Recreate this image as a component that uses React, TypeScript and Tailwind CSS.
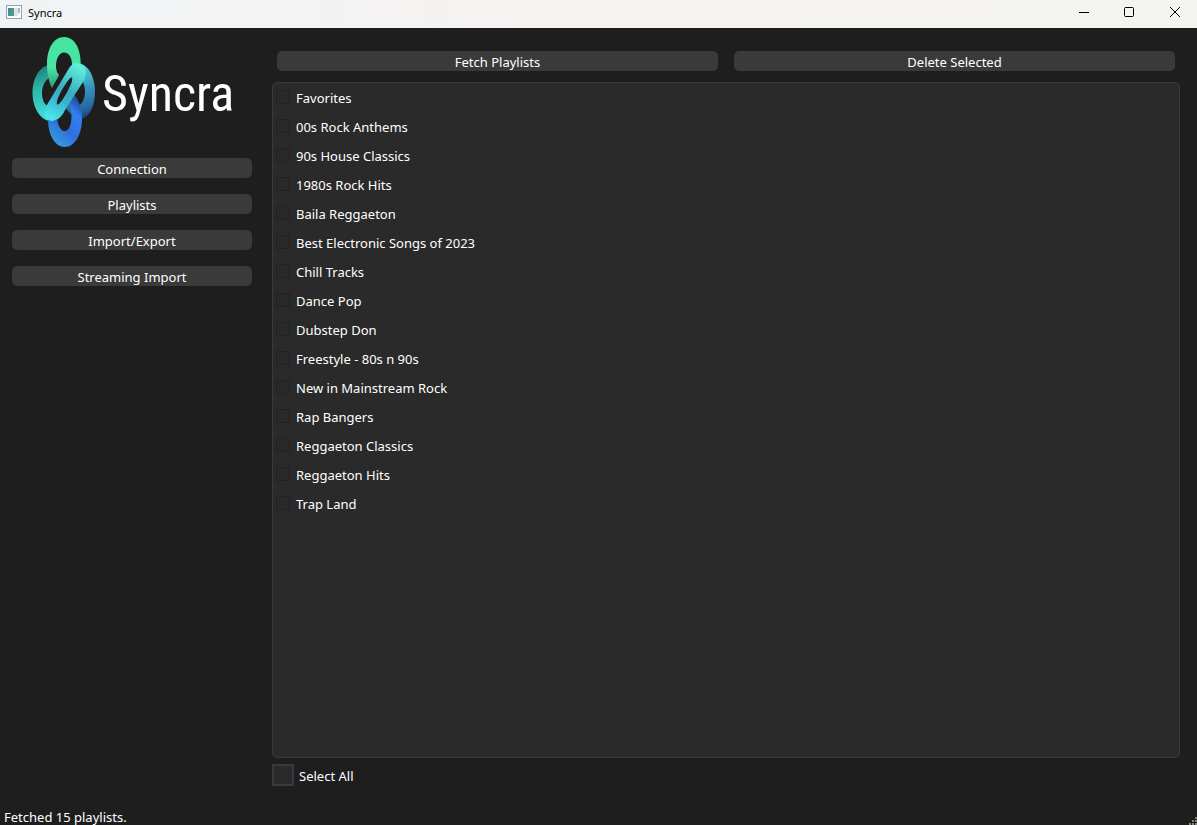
import { useState } from "react";

const pages = ["Connection", "Playlists", "Import/Export", "Streaming Import"];

const playlists = [
  "Favorites",
  "00s Rock Anthems",
  "90s House Classics",
  "1980s Rock Hits",
  "Baila Reggaeton",
  "Best Electronic Songs of 2023",
  "Chill Tracks",
  "Dance Pop",
  "Dubstep Don",
  "Freestyle - 80s n 90s",
  "New in Mainstream Rock",
  "Rap Bangers",
  "Reggaeton Classics",
  "Reggaeton Hits",
  "Trap Land",
];

const buttonStyle =
  "flex h-5 items-center justify-center rounded-[5px] bg-[#3a3a3a] pt-px text-[13px] leading-4 text-white hover:bg-[#484848]";

function AppIcon() {
  return (
    <svg width="16" height="14" viewBox="0 0 16 14" aria-hidden="true">
      <defs>
        <linearGradient id="pane" x1="0" y1="0" x2="1" y2="1">
          <stop offset="0" stopColor="#4a7fb0" />
          <stop offset="1" stopColor="#4aa874" />
        </linearGradient>
      </defs>
      <rect x="0.5" y="0.5" width="15" height="13" fill="#fafafa" stroke="#9ba3ab" />
      <rect x="2" y="3" width="6" height="8" fill="url(#pane)" />
      <rect x="8" y="3" width="4" height="8" fill="#dfe2e4" />
      <rect x="12" y="3" width="2" height="5" fill="#9cc0d0" />
    </svg>
  );
}

function LogoMark() {
  return (
    <svg width="64" height="112" viewBox="32 36 64 112" aria-hidden="true">
      <defs>
        <linearGradient id="top" x1="0" y1="0" x2="0" y2="1">
          <stop offset="0" stopColor="#43e5a0" />
          <stop offset="0.6" stopColor="#4be3a4" />
          <stop offset="1" stopColor="#2b9a78" />
        </linearGradient>
        <linearGradient id="left" x1="0.3" y1="0" x2="0.5" y2="1">
          <stop offset="0" stopColor="#1c7f78" />
          <stop offset="0.4" stopColor="#2fb9a8" />
          <stop offset="1" stopColor="#46dfe4" />
        </linearGradient>
        <linearGradient id="right" x1="0.4" y1="0" x2="0.6" y2="1">
          <stop offset="0" stopColor="#56e8da" />
          <stop offset="0.5" stopColor="#3793bd" />
          <stop offset="0.85" stopColor="#2667a0" />
          <stop offset="1" stopColor="#1b3f70" />
        </linearGradient>
        <linearGradient id="bottom" x1="0.8" y1="0.05" x2="0.3" y2="1">
          <stop offset="0" stopColor="#1c3f86" />
          <stop offset="0.3" stopColor="#3280f0" />
          <stop offset="0.65" stopColor="#2f6fdc" />
          <stop offset="1" stopColor="#359fdf" />
        </linearGradient>
        <linearGradient id="bar" gradientUnits="userSpaceOnUse" x1="78" y1="66" x2="50" y2="118">
          <stop offset="0" stopColor="#5cf0da" />
          <stop offset="0.45" stopColor="#3aadc0" />
          <stop offset="0.65" stopColor="#38b4cc" />
          <stop offset="1" stopColor="#4be6ea" />
        </linearGradient>
      </defs>
      <path
        fillRule="evenodd"
        fill="url(#left)"
        d="M51 65C40 65 32.500 78 32.500 93S41 121 51 121C62 121 68 108 68 93S61 65 51 65ZM53 77C47 77 42 84 42 93S46 107 52 107S60 99 60 90S58 77 53 77Z"
      />
      <path
        fillRule="evenodd"
        fill="url(#right)"
        d="M77 63C88 63 95 77 95 91C95 106 90 116 82 119C73 119 61 107 61 91S67 63 77 63ZM76 78C81 78 85 83 85 91S82 106 76 106S70 98 70 91S71 78 76 78Z"
      />
      <path
        fillRule="evenodd"
        fill="url(#bottom)"
        d="M65 90C75 90 82 104 82 119S75 147 65 147S48 135 48 119S55 90 65 90ZM64.500 102C60 102 57 109 57 116S60 131 64.500 131S71.500 125 71.500 116S69 102 64.500 102Z"
      />
      <path d="M52 77L56 62L73 60L73 70L52 102L46 102Z" fill="#1e1e1e" />
      <path
        fill="url(#top)"
        d="M64 37C54 37 47 48 47 64C47 74 49 82 52 88C54 84 57 79 59 75C56.500 72 56 69 56 66C56 59 59 52.500 64 52.500C69 52.500 72 58 72 64L72 72L80 74C83 54 77 37 64 37Z"
      />
      <path
        fillRule="evenodd"
        fill="url(#bar)"
        d="M77 63C86 64 88 73 83 82L63 113C60 118 55 121 51 121C44 119 43 111 48 103L68 70C70 66 73 63 77 63ZM72 77.500C70 77 67 82 64 86.500C60 93 56 101 57 104.500C59 105.500 63 99 66 94C70 87 73 80 72 77.500Z"
      />
      <path d="M72 77.500C70 77 67 82 64 86.500C60 93 56 101 57 104.500C59 105.500 63 99 66 94C70 87 73 80 72 77.500Z" fill="#1e1e1e" />
    </svg>
  );
}

function TitleBar() {
  return (
    <header className="flex h-7 items-center bg-linear-to-r from-[#f0f3f5] via-[#f6f2f0] to-[#f3f4f0] pb-1 pl-1.5 text-black">
      <AppIcon />
      <h1 className="ml-1.5 flex-1 pt-0.5 text-[11px]">Syncra</h1>
      <div className="flex">
        <button aria-label="Minimize" className="flex h-6 w-[45px] items-center justify-center">
          <svg width="10" height="10" viewBox="0 0 10 10" stroke="currentColor">
            <path d="M0 5.500H10" />
          </svg>
        </button>
        <button aria-label="Maximize" className="flex h-6 w-[46px] items-center justify-center">
          <svg width="10" height="10" viewBox="0 0 10 10" fill="none" stroke="currentColor">
            <rect x="0.5" y="0.5" width="9" height="9" rx="1" />
          </svg>
        </button>
        <button aria-label="Close" className="flex h-6 w-[45px] items-center justify-center">
          <svg width="10" height="10" viewBox="0 0 10 10" stroke="currentColor">
            <path d="M0 0L10 10M10 0L0 10" />
          </svg>
        </button>
      </div>
    </header>
  );
}

function SizeGrip() {
  return (
    <svg width="8" height="8" viewBox="0 0 8 8" fill="#85857f" aria-hidden="true">
      <path d="M6 0h2v2H6zM3 3h2v2H3zM6 3h2v2H6zM0 6h2v2H0zM3 6h2v2H3zM6 6h2v2H6z" />
    </svg>
  );
}

export default function App() {
  const [selected, setSelected] = useState<string[]>([]);

  const toggle = (name: string) =>
    setSelected((current) =>
      current.includes(name) ? current.filter((item) => item !== name) : [...current, name],
    );

  return (
    <div className="flex min-h-screen flex-col bg-[#1e1e1e] font-['Noto_Sans','Open_Sans',sans-serif] text-white">
      <TitleBar />
      <div className="flex flex-1">
        <aside className="w-[264px] shrink-0 px-3 pt-2">
          <div className="flex h-[122px] items-start pl-5">
            <LogoMark />
            <span className="ml-1.5 pt-[22px] font-['Roboto_Condensed','Liberation_Sans_Narrow',sans-serif] text-[50px] leading-[72px]">
              Syncra
            </span>
          </div>
          <nav className="flex flex-col gap-4">
            {pages.map((page) => (
              <button key={page} className={buttonStyle}>
                {page}
              </button>
            ))}
          </nav>
        </aside>
        <main className="flex min-w-0 flex-1 flex-col pt-[23px] pr-[17px] pl-2">
          <div className="flex gap-4 px-[5px]">
            <button className={`${buttonStyle} flex-1`}>Fetch Playlists</button>
            <button className={`${buttonStyle} flex-1`} onClick={() => setSelected([])}>
              Delete Selected
            </button>
          </div>
          <ul className="mt-[11px] flex-1 rounded-[5px] border border-[#3a3a3a] bg-[#2a2a2a] px-[3px]">
            {playlists.map((name) => (
              <li key={name} className="h-[29px]">
                <label className="flex h-7 items-center gap-1.5 text-[13px]">
                  <input
                    type="checkbox"
                    checked={selected.includes(name)}
                    onChange={() => toggle(name)}
                    className="size-3.5 appearance-none border border-[#222222] bg-[#292929] checked:bg-[#5a5a5a]"
                  />
                  <span className="pt-0.5 leading-5">{name}</span>
                </label>
              </li>
            ))}
          </ul>
          <label className="mt-1.5 flex h-[22px] items-center gap-[5px] self-start text-[13px]">
            <input
              type="checkbox"
              checked={selected.length === playlists.length}
              onChange={(event) => setSelected(event.target.checked ? playlists : [])}
              className="size-[22px] appearance-none border-2 border-[#3a3a3a] bg-[#2a2a2a] checked:bg-[#5a5a5a]"
            />
            <span className="pt-0.5 leading-5">Select All</span>
          </label>
        </main>
      </div>
      <footer className="mt-[22px] flex h-[17px] items-end justify-between pl-1 text-[13px] leading-4">
        <span role="status">Fetched 15 playlists.</span>
        <SizeGrip />
      </footer>
    </div>
  );
}
